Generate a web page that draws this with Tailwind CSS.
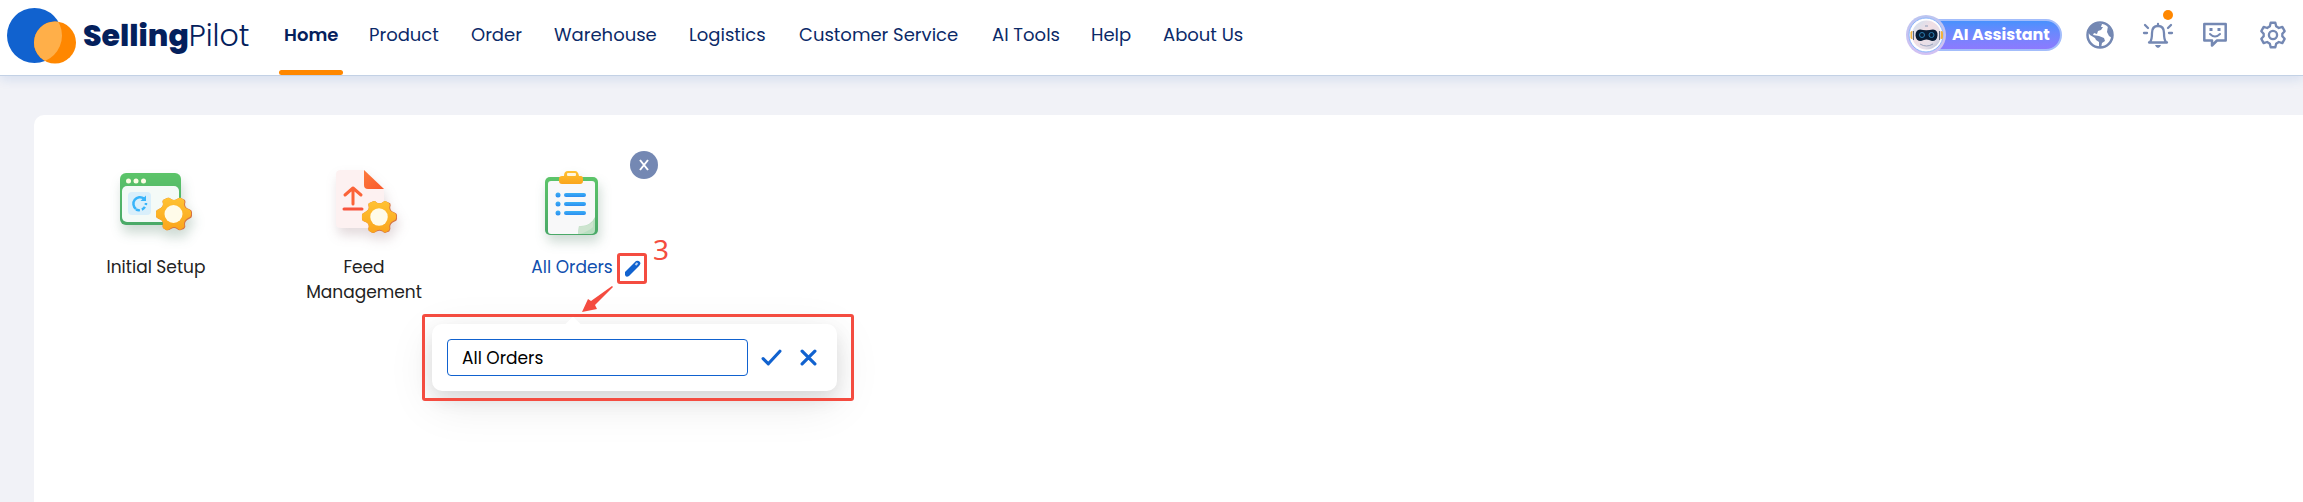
<!DOCTYPE html>
<html lang="en">
<head>
<meta charset="utf-8">
<title>SellingPilot</title>
<script src="https://cdn.jsdelivr.net/npm/@tailwindcss/browser@4"></script>
</head>
<body class="min-h-screen bg-[#f1f2f7] font-['Poppins','Inter',sans-serif] text-[#222] flex flex-col">
<header class="relative z-10 flex h-[76px] shrink-0 items-stretch border-b border-[#c3d1e5] bg-white pl-[7px] pr-[16px] shadow-[0_4px_10px_rgba(20,80,180,0.11)]">
  <a href="#" class="flex w-[272px] items-center pb-1 text-[#04205c]">
    <svg width="69" height="56" viewBox="0 0 69 56" class="shrink-0">
      <defs><clipPath id="disc"><circle cx="27.5" cy="27.5" r="27.5"/></clipPath></defs>
      <circle cx="27.5" cy="27.5" r="27.5" fill="#1162cf"/>
      <circle cx="48" cy="34.5" r="21" fill="#ff8700"/>
      <circle cx="48" cy="34.5" r="21" fill="#ffaf49" clip-path="url(#disc)"/>
    </svg>
    <span class="ml-[7px] whitespace-nowrap text-[30px]"><b class="font-extrabold">Selling</b><span class="font-light">Pilot</span></span>
  </a>
  <nav class="grid grid-cols-[90px_102px_83px_135px_110px_193px_99px_72px_90px] text-[18px] leading-[70px] whitespace-nowrap text-[#0b2a68]">
    <a href="#" class="relative justify-self-start px-[5px] font-semibold text-[#04205c]">Home<span class="absolute bottom-0 left-0 h-[5px] w-full min-w-[64px] rounded-full bg-[#ff8700]"></span></a>
    <a href="#">Product</a>
    <a href="#">Order</a>
    <a href="#">Warehouse</a>
    <a href="#">Logistics</a>
    <a href="#">Customer Service</a>
    <a href="#">AI Tools</a>
    <a href="#">Help</a>
    <a href="#">About Us</a>
  </nav>
  <div class="ml-auto flex items-center pb-[5px] text-[#7488b3]">
    <button class="flex h-10 items-center text-[16px] font-bold text-white">
      <svg width="40" height="40" viewBox="0 0 40 40" class="relative z-10 shrink-0">
        <defs>
          <linearGradient id="ring" x1="0" y1="0" x2="0" y2="1"><stop offset="0" stop-color="#bcc5f0"/><stop offset="1" stop-color="#d3c1f3"/></linearGradient>
          <linearGradient id="face" x1="0" y1="0" x2="1" y2="1"><stop offset="0" stop-color="#c9e0f2"/><stop offset=".4" stop-color="#f1dfe4"/><stop offset=".7" stop-color="#e6dfe8"/><stop offset="1" stop-color="#a9b7d2"/></linearGradient>
        </defs>
        <circle cx="20" cy="20" r="20" fill="url(#ring)"/>
        <circle cx="20" cy="20" r="17" fill="#fff" stroke="#8ab6fb"/>
        <rect x="4.500" y="16" width="3" height="8" rx="1.500" fill="#f2b33e"/><rect x="34" y="16" width="3" height="8" rx="1.500" fill="#f2b33e"/>
        <circle cx="20.500" cy="20" r="14.500" fill="url(#face)"/>
        <path d="M7.500 16V25M33.500 16V25" stroke="#5a6680" stroke-width="1"/>
        <path d="M19 11h3" stroke="#8b9bb8"/>
        <path d="M14 14.500Q20 16 27 14.500Q32 15 31.500 20.500Q31 26 26 26Q23 24.500 20.500 24.500Q18 24.500 15 26Q10 26 9.500 20.500Q9.500 15 14 14.500Z" fill="#071b34"/>
        <circle cx="16" cy="20" r="2.500" fill="none" stroke="#2a7db0"/><circle cx="25.500" cy="20" r="2.500" fill="none" stroke="#2a7db0"/>
        <path d="M14 29Q20.500 33 27 29" fill="none" stroke="#96a2bd"/>
      </svg>
      <span class="-ml-5 flex h-8 w-[136px] items-center rounded-r-full border-2 border-[#a3bdfb] bg-linear-to-b from-[#4891fd] to-[#8c7afe] pl-[24px] whitespace-nowrap">AI Assistant</span>
    </button>
    <button aria-label="Language" class="ml-[24px]">
      <svg width="28" height="28" viewBox="0 0 28 28"><circle cx="14" cy="14" r="12.500" fill="none" stroke="currentColor" stroke-width="2.500"/><path fill="currentColor" d="M2 11Q5 3 12 2L16 3L15 6L17 6L15 9L12 10L11 13L8 12L7 14L13 15L18 17L19 20L16 22L15 27L13 26L13 21L10 19L9 17L4 14ZM22 5L26 11L26 17L23 15L21 11Z"/></svg>
    </button>
    <button aria-label="Notifications" class="relative ml-[28px]">
      <svg width="32" height="28" viewBox="0 0 32 28" fill="none" stroke="currentColor" stroke-width="2" stroke-linecap="round" stroke-linejoin="round"><path d="M16 3V5M7 21.500H25M8 21Q10 19 10 12Q10 5 16 5Q22 5 22 12Q22 19 24 21M6 7L3 4M26 7L29 4M5 12H2M27 12H30" stroke-width="2.300"/><path d="M13 24H19Q18 27 16 27Q14 27 13 24Z" fill="currentColor" stroke="none"/></svg>
      <span class="absolute -top-[11px] right-[1px] size-[10px] rounded-full bg-[#ff8700]"></span>
    </button>
    <button aria-label="Messages" class="ml-[28px]">
      <svg width="26" height="28" viewBox="0 0 26 28" fill="none" stroke="currentColor" stroke-width="2.500"><path d="M2.300 3H23.700V19.500H15L10 24.500V19.500H2.300Z" stroke-linejoin="round"/><path d="M8 13Q13 18 18 13" stroke-linecap="round" stroke-width="2"/><path d="M9 7V10M17 7V10" stroke-width="3"/></svg>
    </button>
    <button aria-label="Settings" class="ml-[31px]">
      <svg width="28" height="28" viewBox="0 0 24 24" fill="none" stroke="currentColor" stroke-width="2" stroke-linejoin="round"><path d="M10 1.500H14L14.700 4.500L17 6L20 5L22 8.700L20 11V13L22 15.300L20 19L17 18L14.700 19.500L14 22.500H10L9.300 19.500L7 18L4 19L2 15.300L4 13V11L2 8.700L4 5L7 6L9.300 4.500Z"/><circle cx="12" cy="12" r="3.500"/></svg>
    </button>
  </div>
</header>
<main class="ml-[34px] mt-[39px] flex-1 rounded-tl-[10px] bg-white pl-[18px] pt-[41px]">
  <svg width="0" height="0" class="absolute">
    <defs>
      <linearGradient id="gold" x1="0" y1="0" x2="0" y2="1"><stop offset="0" stop-color="#ffc233"/><stop offset="1" stop-color="#faa51c"/></linearGradient>
      <linearGradient id="green" x1="0" y1="0" x2="0" y2="1"><stop offset="0" stop-color="#5cc469"/><stop offset="1" stop-color="#4aa968"/></linearGradient>
      <linearGradient id="fold" x1="0" y1="0" x2="1" y2="1"><stop offset="0" stop-color="#fd7a3c"/><stop offset="1" stop-color="#f9592c"/></linearGradient>
      <linearGradient id="bluebar" x1="0" y1="0" x2="0" y2="1"><stop offset="0" stop-color="#3bb0f6"/><stop offset="1" stop-color="#2c8df0"/></linearGradient>
      <symbol id="cog" viewBox="0 0 38 36">
        <path d="M12 2Q14 1 16 3Q19 5 22 3Q25 1 26 2L30 4Q31 6 30 8Q30 12 34 13Q37 14 37 16V20Q37 22 34 23Q30 25 30 28Q31 31 29 33L26 34Q24 35 22 33Q19 31 16 33Q13 35 11 34L8 32Q7 30 8 28Q8 24 4 23Q1 22 1 20V16Q1 14 4 13Q8 11 8 8Q7 5 8 4Z" fill="#d67343"/>
        <path d="M12 2Q14 1 16 3Q19 5 22 3Q25 1 26 2L29 4Q30 6 29 8Q29 12 33 13Q36 14 36 16V19Q36 21 33 22Q29 24 29 28Q30 31 28 32L25 34Q24 34 22 32Q19 30 16 32Q13 35 11 34L8 32Q7 30 8 28Q8 24 4 23Q1 22 1 20V16Q1 14 4 13Q8 11 8 8Q7 5 8 4Z" fill="url(#gold)"/>
        <circle cx="18.500" cy="18" r="9" fill="#fffbe9"/>
      </symbol>
    </defs>
  </svg>
  <div class="grid grid-cols-[208px_208px_208px] text-center text-[17px] leading-[25px]">
    <a href="#" class="flex flex-col items-center">
      <svg width="80" height="80" viewBox="1 0 80 80" class="mt-[11px] overflow-visible drop-shadow-[2px_8px_6px_rgba(30,90,60,0.22)]">
        <rect x="5" y="6" width="61" height="52" rx="6" fill="url(#green)"/>
        <rect x="7" y="19" width="57" height="36" rx="5" fill="#f4faf7"/>
        <g fill="#fdfde4"><circle cx="13.500" cy="14" r="2.500"/><circle cx="21" cy="14" r="2.500"/><circle cx="28.500" cy="14" r="2.500"/></g>
        <rect x="13" y="25" width="23" height="23" rx="4" fill="#d9effb"/>
        <path d="M29 31.500A6.500 6.500 0 1 0 21 42" fill="none" stroke="#37b4fa" stroke-width="2.500"/><path d="M21 42.500A7 7 0 0 0 31 36" fill="none" stroke="#37b4fa" stroke-width="2.500" stroke-dasharray="4 2"/><path d="M31 28.500V34H25.500Z" fill="#37b4fa"/>
        <use href="#cog" x="40" y="29" width="38" height="36"/>
      </svg>
      <span class="mt-[8px]">Initial Setup</span>
    </a>
    <a href="#" class="flex flex-col items-center">
      <svg width="80" height="80" viewBox="0 0 80 80" class="mt-[11px] overflow-visible drop-shadow-[2px_7px_6px_rgba(100,50,60,0.18)]">
        <path d="M17 3H40L60 22V61H17Q12 61 12 57V7Q12 3 17 3Z" fill="#fdf1f1"/>
        <path d="M40 3L60 22H44Q40 22 40 18Z" fill="url(#fold)"/>
        <path d="M29 37V22M21 28L29 21L37 28" fill="none" stroke="#fb6338" stroke-width="3" stroke-linecap="round" stroke-linejoin="round"/>
        <path d="M20 42H38" stroke="#f8533c" stroke-width="3" stroke-linecap="round"/>
        <use href="#cog" x="37" y="32" width="37" height="36"/>
      </svg>
      <span class="mt-[8px]">Feed<br>Management</span>
    </a>
    <div class="relative flex flex-col items-center">
      <svg width="80" height="80" viewBox="1 -2 80 80" class="mt-[11px] overflow-visible drop-shadow-[2px_7px_6px_rgba(30,90,60,0.22)]">
        <rect x="14" y="8" width="53" height="58" rx="5" fill="url(#green)"/>
        <path d="M20 12H61Q64 12 64 15V50Q60 60 49 65H20Q17 65 17 62V15Q17 12 20 12Z" fill="#f8f8f9"/>
        <path d="M64 48V61Q64 65 60 65H47L48 57Q59 58 64 48Z" fill="#b9dfc1"/>
        <path d="M62 58Q58 62 49 65H47L48 57Q58 58 62 52Z" fill="#cde4cf"/>
        <path d="M28 10Q28 7 31 7H33Q33 2 37 2H44Q47 2 48 7H50Q52 7 52 10V12Q52 15 49 15H31Q28 15 28 12Z" fill="url(#gold)"/><rect x="36" y="4" width="9" height="3" rx="1" fill="#fff7df"/>
        <g fill="url(#bluebar)"><circle cx="27" cy="26" r="2.500"/><circle cx="27" cy="35" r="2.500"/><circle cx="27" cy="44" r="2.500"/><rect x="33" y="24" width="22" height="4" rx="2"/><rect x="33" y="33" width="22" height="4" rx="2"/><rect x="33" y="42" width="22" height="4" rx="2"/></g>
      </svg>
      <a href="#" class="mt-[8px] text-[#0f4fae]">All Orders</a>
      <button aria-label="Remove All Orders" class="absolute left-[162px] -top-[5px] grid size-7 place-items-center rounded-full bg-[#7488b3]"><svg width="12" height="12" viewBox="0 0 12 12" stroke="#fff" stroke-width="2"><path d="M2 1L10 11M10 1L2 11"/></svg></button>
      <button aria-label="Edit name" class="absolute left-[149px] top-[97px] grid h-[31px] w-[30px] place-items-center rounded-[3px] border-3 border-[#f44c40]"><svg width="17" height="17" viewBox="0 0 17 17"><path d="M1 12L12 1Q14 0 16 2Q17 4 15 6L5 16Q2 18 1 15Z" fill="#1162cf"/><path d="M11.500 5L13.500 3" stroke="#b9d1f3" stroke-width="2"/></svg></button>
      <span class="absolute left-[185px] top-[79px] font-['Noto_Sans'] text-[28px] leading-[28px] text-[#f44c40]">3</span>
      <svg class="absolute left-[114px] top-[129px] z-20" width="32" height="28" viewBox="0 0 32 28"><path d="M30 1L31 2L13 20L15 24L0 27L6 14L9 16Z" fill="#f44c40"/></svg>
      <form class="absolute -left-[36px] top-[168px] flex h-[67px] w-[405px] items-center rounded-[10px] bg-white pl-[15px] shadow-[0_8px_18px_rgba(0,0,0,0.1),0_12px_48px_rgba(0,0,0,0.09)]">
        <span class="absolute left-[135px] -top-[5px] size-3 rotate-45 bg-white"></span>
        <span class="pointer-events-none absolute -left-[10px] -top-[10px] h-[87px] w-[432px] rounded-[3px] border-3 border-[#f44c40]"></span>
        <input aria-label="Name" value="All Orders" class="h-[37px] w-[301px] rounded-[4px] border border-[#1162cf] bg-white px-[14px] text-[17px] text-black outline-none">
        <button type="button" aria-label="Save" class="ml-[13px]"><svg width="21" height="17" viewBox="0 0 20 16" fill="none" stroke="#1162cf" stroke-width="3" stroke-linecap="round" stroke-linejoin="round"><path d="M2 9L7 14L18 2"/></svg></button>
        <button type="button" aria-label="Cancel" class="ml-[18px]"><svg width="17" height="17" viewBox="0 0 16 16" stroke="#1162cf" stroke-width="3" stroke-linecap="round"><path d="M2 2L14 14M14 2L2 14"/></svg></button>
      </form>
    </div>
  </div>
</main>
</body>
</html>
